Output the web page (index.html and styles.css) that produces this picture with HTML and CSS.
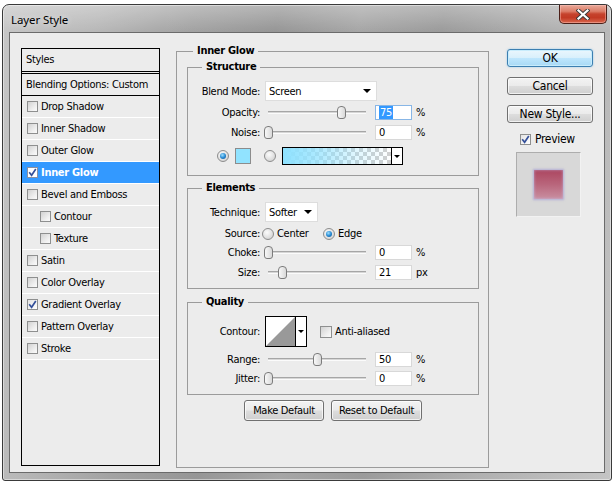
FILE: index.html
```html
<!DOCTYPE html>
<html>
<head>
<meta charset="utf-8">
<title>Layer Style</title>
<link rel="stylesheet" href="styles.css">
</head>
<body>
<div class="window">
  <div class="titlebar">
    <span class="title">Layer Style</span>
    <span class="close"><svg width="14" height="11" viewBox="0 0 14 11"><path d="M2.5 1.5 L11.5 9.5 M11.5 1.5 L2.5 9.5" stroke="#3a3a3a" stroke-width="4" stroke-linecap="square"/><path d="M2.5 1.5 L11.5 9.5 M11.5 1.5 L2.5 9.5" stroke="#ffffff" stroke-width="2.2" stroke-linecap="square"/></svg></span>
  </div>
  <div class="content">
    <div class="stylelist">
      <div class="list-head">Styles</div>
      <div class="list-blend">Blending Options: Custom</div>
      <div class="item"><span class="cb"></span>Drop Shadow</div>
      <div class="item"><span class="cb"></span>Inner Shadow</div>
      <div class="item"><span class="cb"></span>Outer Glow</div>
      <div class="item selected"><span class="cb on"><svg width="9" height="9" viewBox="0 0 9 9"><path d="M1.2 4.2 L3.6 7.2 L7.8 1" fill="none" stroke="#34509a" stroke-width="1.7"/></svg></span>Inner Glow</div>
      <div class="item"><span class="cb"></span>Bevel and Emboss</div>
      <div class="item sub"><span class="cb"></span>Contour</div>
      <div class="item sub"><span class="cb"></span>Texture</div>
      <div class="item"><span class="cb"></span>Satin</div>
      <div class="item"><span class="cb"></span>Color Overlay</div>
      <div class="item"><span class="cb on"><svg width="9" height="9" viewBox="0 0 9 9"><path d="M1.2 4.2 L3.6 7.2 L7.8 1" fill="none" stroke="#34509a" stroke-width="1.7"/></svg></span>Gradient Overlay</div>
      <div class="item"><span class="cb"></span>Pattern Overlay</div>
      <div class="item"><span class="cb"></span>Stroke</div>
    </div>

    <fieldset class="panel">
      <legend>Inner Glow</legend>

      <fieldset class="group structure">
        <legend>Structure</legend>
        <div class="row r-select">
          <span class="lbl">Blend Mode:</span>
          <div class="select blend"><span>Screen</span><span class="arrow"></span></div>
        </div>
        <div class="row r-num gap4">
          <span class="lbl">Opacity:</span>
          <div class="slider"><span class="track"></span><span class="thumb" style="left:69px"></span></div>
          <span class="num focus"><span class="sel">75</span></span><span class="unit">%</span>
        </div>
        <div class="row r-num gap5">
          <span class="lbl">Noise:</span>
          <div class="slider"><span class="track"></span><span class="thumb" style="left:-4px"></span></div>
          <span class="num">0</span><span class="unit">%</span>
        </div>
        <div class="row r-color">
          <span class="radio on first"></span>
          <span class="swatch"></span>
          <span class="radio second"></span>
          <div class="gradbox"><span class="grad"></span><span class="gdrop"><span class="arrow small"></span></span></div>
        </div>
      </fieldset>

      <fieldset class="group elements">
        <legend>Elements</legend>
        <div class="row r-select">
          <span class="lbl">Technique:</span>
          <div class="select tech"><span>Softer</span><span class="arrow"></span></div>
        </div>
        <div class="row r-source">
          <span class="lbl">Source:</span>
          <span class="radio src"></span><span class="opt center">Center</span>
          <span class="radio on"></span><span class="opt">Edge</span>
        </div>
        <div class="row r-num gap5">
          <span class="lbl">Choke:</span>
          <div class="slider"><span class="track"></span><span class="thumb" style="left:-4px"></span></div>
          <span class="num">0</span><span class="unit">%</span>
        </div>
        <div class="row r-num gap5">
          <span class="lbl">Size:</span>
          <div class="slider"><span class="track"></span><span class="thumb" style="left:10px"></span></div>
          <span class="num">21</span><span class="unit">px</span>
        </div>
      </fieldset>

      <fieldset class="group quality">
        <legend>Quality</legend>
        <div class="row r-contour">
          <span class="lbl">Contour:</span>
          <div class="contour">
            <svg class="curve" width="29" height="29" viewBox="0 0 29 29"><rect width="29" height="29" fill="#fff"/><polygon points="0,29 29,0 29,29" fill="#999999"/></svg>
            <span class="cdrop"><span class="arrow small"></span></span>
          </div>
          <span class="cb aa"></span><span class="opt">Anti-aliased</span>
        </div>
        <div class="row r-num gap5">
          <span class="lbl">Range:</span>
          <div class="slider"><span class="track"></span><span class="thumb" style="left:45px"></span></div>
          <span class="num">50</span><span class="unit">%</span>
        </div>
        <div class="row r-num gap4">
          <span class="lbl">Jitter:</span>
          <div class="slider"><span class="track"></span><span class="thumb" style="left:-4px"></span></div>
          <span class="num">0</span><span class="unit">%</span>
        </div>
      </fieldset>

      <div class="defaults">
        <span class="btn small mk">Make Default</span>
        <span class="btn small rs">Reset to Default</span>
      </div>
    </fieldset>

    <div class="side">
      <span class="btn big ok">OK</span>
      <span class="btn big">Cancel</span>
      <span class="btn big">New Style...</span>
      <div class="preview-row"><span class="cb on"><svg width="9" height="9" viewBox="0 0 9 9"><path d="M1.2 4.2 L3.6 7.2 L7.8 1" fill="none" stroke="#34509a" stroke-width="1.7"/></svg></span><span>Preview</span></div>
      <div class="preview"><span class="sample"></span></div>
    </div>
  </div>
</div>
</body>
</html>
```
FILE: styles.css
```css
* { box-sizing: border-box; }
html, body { margin: 0; padding: 0; }
body {
  width: 614px;
  height: 482px;
  overflow: hidden;
  background: #ffffff;
  font-family: "DejaVu Sans Condensed", "Liberation Sans", sans-serif;
  font-size: 11px;
  letter-spacing: -0.3px;
  color: #000;
}

/* window frame */
.window {
  margin: 4px 0 0 2px;
  width: 610px;
  height: 477px;
  border: 1px solid #3a3a3a;
  border-radius: 7px 7px 3px 3px;
  padding: 0 6px 7px;
  display: flex;
  flex-direction: column;
  background:
    linear-gradient(180deg, rgba(255,255,255,0.3), rgba(255,255,255,0) 26px),
    linear-gradient(100deg, #c6c6c6 0%, #b8b8b8 14%, #a2a2a2 28%, #969696 40%, #a6a6a6 52%, #9b9b9b 64%, #b0b0b0 80%, #c4c4c4 100%);
  box-shadow: inset 0 0 0 1px rgba(255,255,255,0.45);
}
.titlebar {
  height: 27px;
  margin: 0 -6px;
  padding: 0 4px 0 8px;
  display: flex;
  align-items: center;
  flex-shrink: 0;
}
.title {
  font-family: "Noto Sans", "Open Sans", sans-serif;
  font-size: 11.5px;
  letter-spacing: -0.1px;
  color: #000;
  padding-top: 1px;
  text-shadow: 0 0 6px rgba(255,255,255,0.7);
}
.close {
  margin-left: auto;
  align-self: flex-start;
  width: 48px;
  height: 19px;
  border: 1px solid #4b1f18;
  border-top: none;
  border-radius: 0 0 5px 5px;
  background: linear-gradient(180deg, #e9a999 0%, #dc7d68 35%, #c6432d 50%, #c23a24 70%, #d9674e 100%);
  box-shadow: inset 0 0 0 1px rgba(255,200,190,0.45);
  display: flex;
  align-items: center;
  justify-content: center;
}

/* client area */
.content {
  height: 441px;
  background: #ececec;
  border: 1px solid #6b6b6b;
  padding-left: 11px;
  display: flex;
  align-items: flex-start;
}

/* styles list */
.stylelist {
  margin-top: 15px;
  width: 139px;
  height: 418px;
  flex-shrink: 0;
  border: 1px solid #000;
  background: #ececec;
}
.list-head {
  height: 25px;
  padding-left: 4px;
  line-height: 21px;
  border-bottom: 3px double #000;
}
.list-blend {
  height: 22px;
  padding-left: 4px;
  line-height: 21px;
  border-bottom: 1px solid #000;
}
.item {
  height: 22px;
  border-bottom: 1px solid #ffffff;
  display: flex;
  align-items: center;
  padding-left: 5px;
  white-space: nowrap;
}
.item.sub { padding-left: 18px; }
.item.selected {
  background: #3399ff;
  color: #fff;
  font-weight: bold;
}
.cb {
  width: 11px;
  height: 11px;
  flex-shrink: 0;
  margin-right: 3px;
  border: 1px solid #8e8f8f;
  background: linear-gradient(135deg, #d2d2d2 0%, #f1f1f1 70%, #fafafa 100%);
  display: flex;
  align-items: center;
  justify-content: center;
}
.cb.on { background: linear-gradient(135deg, #e4e4e4, #ffffff); }
.item.selected .cb { background: #ffffff; border-color: #8a8fa0; }

/* main panel */
fieldset {
  margin: 0;
  min-width: 0;
  border: 1px solid #9b9b9b;
}
legend {
  font-weight: bold;
  line-height: 14px;
  padding: 0 4px;
}
.panel {
  margin: 11px 0 0 16px;
  width: 313px;
  height: 424px;
  flex-shrink: 0;
  padding: 2px 9px 0 10px;
}
.panel > legend { margin-left: 6px; }
.group {
  width: 292px;
  padding: 7px 0 0 0;
}
.group > legend { margin-left: 14px; }
.structure { padding-bottom: 10px; }
.elements { margin-top: 5px; padding-bottom: 8px; }
.quality { margin-top: 6px; padding-bottom: 8px; }

.row {
  display: flex;
  align-items: center;
  white-space: nowrap;
}
.lbl {
  width: 72px;
  text-align: right;
  flex-shrink: 0;
}
.r-select { height: 20px; }
.r-num { height: 15px; }
.gap4 { margin-top: 4px; }
.gap5 { margin-top: 5px; }

.select {
  margin-left: 5px;
  height: 20px;
  background: #ffffff;
  border: 1px solid #dddddd;
  display: flex;
  align-items: center;
  padding: 0 5px 0 3px;
  justify-content: space-between;
}
.select.blend { width: 112px; }
.select.tech { width: 53px; }
.arrow {
  width: 0;
  height: 0;
  border-left: 4px solid transparent;
  border-right: 4px solid transparent;
  border-top: 4px solid #000;
}
.arrow.small {
  border-left-width: 3px;
  border-right-width: 3px;
  border-top-width: 3px;
}

.slider {
  margin-left: 8px;
  width: 98px;
  height: 15px;
  position: relative;
  flex-shrink: 0;
}
.track {
  display: block;
  margin-top: 6px;
  height: 3px;
  border-top: 1px solid #a6a6a6;
  border-bottom: 1px solid #fbfbfb;
  background: #d6d6d6;
}
.thumb {
  position: absolute;
  top: 1px;
  width: 9px;
  height: 13px;
  border: 1px solid #7c7c7c;
  border-radius: 4px 4px 3px 3px;
  background: linear-gradient(90deg, #f8f8f8, #d9d9d9);
}
.num {
  margin-left: 9px;
  width: 37px;
  height: 15px;
  background: #fff;
  border: 1px solid #d8d8d8;
  padding-left: 3px;
  line-height: 13px;
  flex-shrink: 0;
}
.num.focus { border-color: #88b6e6; }
.sel { background: #3399ff; color: #fff; padding: 0 1px; }
.unit { margin-left: 4px; }

.r-color { margin-top: 7px; height: 18px; }
.radio {
  width: 12px;
  height: 12px;
  border-radius: 50%;
  border: 1px solid #8d8d8d;
  background: radial-gradient(circle at 40% 35%, #fbfbfb 0%, #e6e6e6 45%, #c9c9c9 100%);
  flex-shrink: 0;
  display: flex;
  align-items: center;
  justify-content: center;
}
.radio.on::after {
  content: "";
  width: 6px;
  height: 6px;
  border-radius: 50%;
  background: radial-gradient(circle at 40% 35%, #9fe0ff 0%, #2a8cd4 50%, #0b4d8c 100%);
}
.radio.first { margin-left: 29px; }
.swatch {
  margin-left: 6px;
  width: 16px;
  height: 16px;
  border: 1px solid #8c8c8c;
  background: #91e3ff;
}
.radio.second { margin-left: 13px; }
.gradbox {
  margin-left: 6px;
  width: 121px;
  height: 18px;
  border: 1px solid #000;
  display: flex;
}
.grad {
  flex: 1;
  background:
    linear-gradient(90deg, rgba(143,226,255,1) 0%, rgba(143,226,255,0.75) 30%, rgba(143,226,255,0.25) 70%, rgba(143,226,255,0) 100%),
    repeating-conic-gradient(#cfcfcf 0 25%, #ffffff 0 50%) 0 0 / 8px 8px;
}
.gdrop {
  width: 11px;
  border-left: 1px solid #000;
  background: #fff;
  display: flex;
  align-items: center;
  justify-content: center;
}

.r-source { margin-top: 5px; height: 13px; }
.radio.src { margin-left: 2px; }
.opt { margin-left: 3px; }
.opt.center { width: 46px; }

.r-contour { height: 31px; }
.contour {
  margin-left: 5px;
  width: 42px;
  height: 31px;
  border: 1px solid #000;
  background: #fff;
  display: flex;
}
.curve { display: block; }
.cdrop {
  margin-left: auto;
  width: 11px;
  border-left: 1px solid #000;
  display: flex;
  align-items: center;
  justify-content: center;
}
.cb.aa { margin-left: 13px; width: 12px; height: 12px; margin-right: 0; }

/* buttons */
.btn {
  display: flex;
  align-items: center;
  justify-content: center;
  border: 1px solid #707070;
  border-radius: 3px;
  background: linear-gradient(180deg, #f3f3f3 0%, #ebebeb 48%, #dddddd 52%, #cfcfcf 100%);
  box-shadow: inset 0 0 0 1px rgba(255,255,255,0.7);
  white-space: nowrap;
}
.defaults {
  margin-top: 5px;
  display: flex;
  justify-content: center;
  gap: 7px;
}
.btn.small { height: 21px; }
.btn.mk { width: 80px; }
.btn.rs { width: 91px; }

.side {
  margin: 16px 0 0 18px;
  width: 86px;
  display: flex;
  flex-direction: column;
}
.btn.big {
  height: 18px;
  font-size: 12px;
  margin-bottom: 10px;
}
.btn.ok {
  border-color: #3c7fb1;
  background: linear-gradient(180deg, #eaf6fd 0%, #d9f0fc 48%, #bee6fd 52%, #a7d9f5 100%);
  box-shadow: inset 0 0 0 1px #c8ecfc, 0 0 2px rgba(80,170,230,0.6);
}
.preview-row {
  margin-left: 13px;
  display: flex;
  align-items: center;
  height: 12px;
  font-size: 12px;
}
.preview-row .cb { margin-right: 4px; }
.preview {
  margin: 7px 0 0 9px;
  width: 65px;
  height: 65px;
  background: #d8d8d8;
  border: 1px solid;
  border-color: #adadad #f2f2f2 #f2f2f2 #adadad;
  display: flex;
  align-items: center;
  justify-content: center;
}
.sample {
  width: 29px;
  height: 29px;
  background: linear-gradient(180deg, #ac4660 0%, #b9667c 50%, #c98fa1 100%);
  box-shadow: 0 0 2px 1px rgba(150,140,210,0.55), inset 0 0 3px rgba(200,210,255,0.6);
  filter: blur(0.5px);
}
```
